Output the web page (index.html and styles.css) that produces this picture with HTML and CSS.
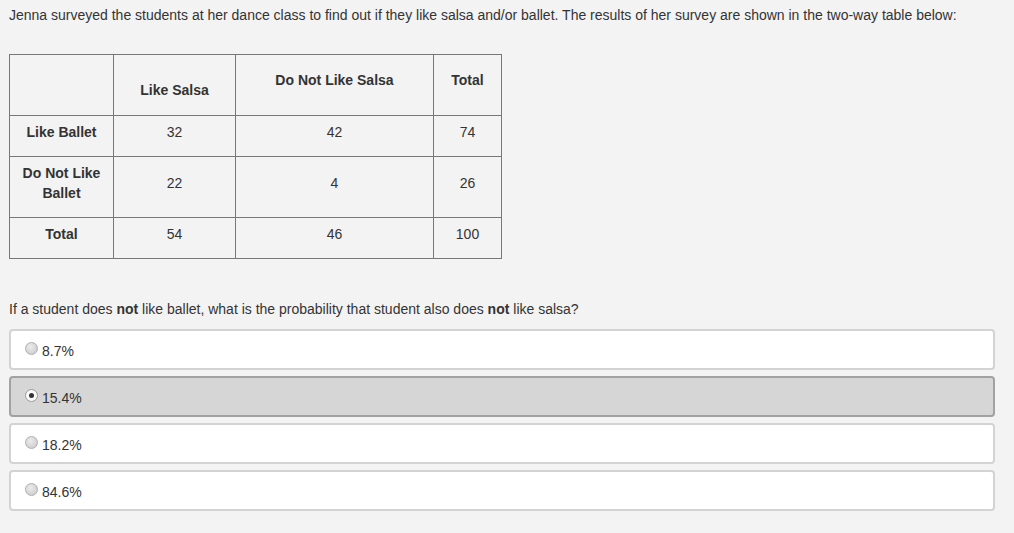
FILE: index.html
```html
<!DOCTYPE html>
<html>
<head>
<meta charset="utf-8">
<link rel="stylesheet" href="styles.css">
</head>
<body>
<div class="page">
  <p class="intro">Jenna surveyed the students at her dance class to find out if they like salsa and/or ballet. The results of her survey are shown in the two-way table below:</p>
  <table class="grid">
    <colgroup>
      <col class="c1"><col class="c2"><col class="c3"><col class="c4">
    </colgroup>
    <tr class="tall head">
      <th></th>
      <th class="down">Like Salsa</th>
      <th>Do Not Like Salsa</th>
      <th>Total</th>
    </tr>
    <tr class="short">
      <th>Like Ballet</th><td>32</td><td>42</td><td>74</td>
    </tr>
    <tr class="tall">
      <th>Do Not Like<br>Ballet</th><td>22</td><td>4</td><td>26</td>
    </tr>
    <tr class="short">
      <th>Total</th><td>54</td><td>46</td><td>100</td>
    </tr>
  </table>
  <p class="question">If a student does <b>not</b> like ballet, what is the probability that student also does <b>not</b> like salsa?</p>
  <div class="options">
    <label class="option"><span class="radio"></span><span>8.7%</span></label>
    <label class="option selected"><span class="radio checked"></span><span>15.4%</span></label>
    <label class="option"><span class="radio"></span><span>18.2%</span></label>
    <label class="option"><span class="radio"></span><span>84.6%</span></label>
  </div>
</div>
</body>
</html>
```
FILE: styles.css
```css
html, body {
  margin: 0;
  padding: 0;
  background: #f3f3f3;
}
.page {
  padding: 5px 19px 0 9px;
  font-family: "Liberation Sans", Arial, sans-serif;
  font-size: 14px;
  line-height: 20px;
  color: #333;
}
.intro {
  margin: 0 0 29px 0;
}
.grid {
  border-collapse: collapse;
  border: 1px solid #222;
  width: 493px;
  table-layout: fixed;
  text-align: center;
}
.c1 { width: 104px; }
.c2 { width: 122px; }
.c3 { width: 198px; }
.c4 { width: 68px; }
.grid th, .grid td {
  border: 1px solid #777;
  padding: 0 4px 9px 4px;
  vertical-align: middle;
}
.grid th {
  font-weight: bold;
}
.grid tr.tall { height: 61px; }
.grid tr.short { height: 41px; }
.grid tr.head th { padding-bottom: 11px; }
.grid tr.head th.down { padding-top: 9px; padding-bottom: 0; }
.question {
  margin: 40px 0 10px 0;
}
.question b { font-weight: bold; }
.options {
  display: flex;
  flex-direction: column;
  gap: 6px;
}
.option {
  display: flex;
  align-items: center;
  gap: 4px;
  height: 37px;
  padding: 0 13px 0 14px;
  background: #fff;
  border: 2px solid #d3d3d3;
  border-radius: 4px;
}
.option span:last-child {
  padding-top: 3px;
}
.option.selected {
  background: #d6d6d6;
  border-color: #a2a2a2;
}
.radio {
  width: 11px;
  height: 11px;
  border-radius: 50%;
  border: 1px solid #b0b0b0;
  background: radial-gradient(circle at 40% 35%, #ececec, #c6c6c6);
  flex: none;
  margin-top: -2px;
  position: relative;
}
.radio.checked {
  background: #fafafa;
  border-color: #999;
}
.radio.checked::after {
  content: "";
  position: absolute;
  left: 3px;
  top: 3px;
  width: 5px;
  height: 5px;
  border-radius: 50%;
  background: #333;
}
```
